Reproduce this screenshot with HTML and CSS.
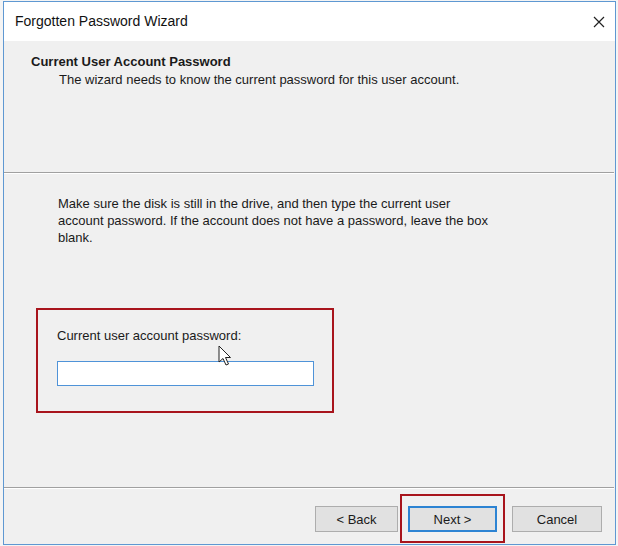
FILE: index.html
```html
<!DOCTYPE html>
<html>
<head>
    <title>Forgotten Password Wizard</title>
    <link rel="stylesheet" href="styles.css">
</head>
<body>
    <div class="window">
        <div class="titlebar">
            <span class="title">Forgotten Password Wizard</span>
            <svg class="close" width="12" height="12" viewBox="0 0 12 12">
                <path d="M1 1 L11 11 M11 1 L1 11" stroke="#222" stroke-width="1.2" fill="none"/>
            </svg>
        </div>

        <div class="header">
            <h1>Current User Account Password</h1>
            <p class="subtitle">The wizard needs to know the current password for this user account.</p>
        </div>
        <div class="separator"></div>

        <div class="content">
            <p class="intro">Make sure the disk is still in the drive, and then type the current user<br>
            account password. If the account does not have a password, leave the box<br>
            blank.</p>

            <div class="password-box">
                <label for="password">Current user account password:</label>
                <input type="password" id="password">
                <!-- mouse pointer -->
                <svg class="pointer" width="14" height="22" viewBox="0 0 14 22">
                    <path d="M1 1 L1 17 L5 13.5 L8 20 L10.5 19 L7.5 12.5 L12.5 12.5 Z" fill="#fff" stroke="#222" stroke-width="1" stroke-linejoin="round"/>
                </svg>
            </div>
        </div>
        <div class="separator"></div>

        <div class="footer">
            <button class="btn back">&lt; Back</button>
            <span class="highlight">
                <button class="btn next">Next &gt;</button>
            </span>
            <button class="btn cancel">Cancel</button>
        </div>
    </div>
</body>
</html>
```

FILE: styles.css
```css
body {
    margin: 0;
    background-color: #f4f4f4;
    font-family: "Liberation Sans", Arial, sans-serif;
    font-size: 13px;
    color: #1a1a1a;
}

.window {
    box-sizing: border-box;
    width: 613px;
    height: 544px;
    margin: 1px 0 0 3px;
    border: 1px solid #5f98d2;
    background-color: #f0f0f0;
    display: flex;
    flex-direction: column;
}

.titlebar {
    height: 39px;
    flex-shrink: 0;
    background-color: #fff;
    display: flex;
    align-items: center;
    justify-content: space-between;
    padding: 0 10px 2px 11px;
    box-sizing: border-box;
}

.title {
    font-size: 14px;
    color: #111;
}

.close {
    margin-top: 2px;
}

.header {
    height: 131px;
    flex-shrink: 0;
    padding: 13px 0 0 27px;
    box-sizing: border-box;
}

h1 {
    margin: 0;
    font-size: 13px;
    line-height: 16px;
    font-weight: bold;
}

.subtitle {
    margin: 2px 0 0 28px;
    line-height: 16px;
}

.separator {
    height: 1px;
    flex-shrink: 0;
    margin-right: 1px;
    background-color: #a0a0a0;
    border-bottom: 1px solid #fff;
}

.content {
    flex: 1;
    padding: 21px 0 0 32px;
}

.intro {
    margin: 0 0 0 22px;
    line-height: 17px;
}

.password-box {
    position: relative;
    box-sizing: border-box;
    width: 298px;
    height: 105px;
    margin-top: 62px;
    padding: 18px 0 0 19px;
    border: 2px solid #a8141c;
}

label {
    display: block;
    line-height: 16px;
}

input[type="password"] {
    box-sizing: border-box;
    width: 257px;
    height: 25px;
    margin-top: 17px;
    border: 1px solid #4f93d8;
    background-color: #fff;
    font-size: 13px;
    outline: none;
}

.pointer {
    position: absolute;
    left: 180px;
    top: 35px;
}

.footer {
    height: 55px;
    flex-shrink: 0;
    display: flex;
    justify-content: flex-end;
    align-items: flex-start;
    padding: 17px 13px 0 0;
    box-sizing: border-box;
}

.btn {
    box-sizing: border-box;
    height: 26px;
    background-color: #e1e1e1;
    border: 1px solid #adadad;
    font-family: "Liberation Sans", Arial, sans-serif;
    font-size: 13px;
    color: #1a1a1a;
    padding: 0;
}

.back {
    width: 83px;
}

.highlight {
    position: relative;
    margin-left: 10px;
    display: flex;
}

.highlight::after {
    content: "";
    position: absolute;
    left: -8px;
    right: -8px;
    top: -12px;
    bottom: -11px;
    border: 2px solid #a8141c;
}

.next {
    width: 89px;
    border: 2px solid #2d84d3;
}

.cancel {
    width: 90px;
    margin-left: 15px;
}
```
